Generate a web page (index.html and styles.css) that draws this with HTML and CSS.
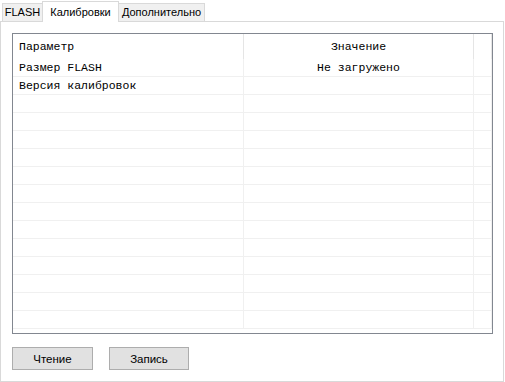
FILE: index.html
```html
<!DOCTYPE html>
<html lang="ru">
<head>
    <meta charset="UTF-8">
    <title>Калибровки</title>
    <link rel="stylesheet" href="styles.css">
</head>
<body>
    <div class="window">
        <div class="tabs">
            <div class="tab tab-flash">FLASH</div>
            <div class="tab tab-calib active">Калибровки</div>
            <div class="tab tab-extra">Дополнительно</div>
        </div>

        <div class="panel">
            <div class="list">
                <div class="row head">
                    <div class="cell">Параметр</div>
                    <div class="cell center">Значение</div>
                    <div class="cell"></div>
                </div>
                <div class="row">
                    <div class="cell">Размер FLASH</div>
                    <div class="cell center">Не загружено</div>
                    <div class="cell"></div>
                </div>
                <div class="row">
                    <div class="cell">Версия калибровок</div>
                    <div class="cell center"></div>
                    <div class="cell"></div>
                </div>
                <div class="row"><div class="cell"></div><div class="cell"></div><div class="cell"></div></div>
                <div class="row"><div class="cell"></div><div class="cell"></div><div class="cell"></div></div>
                <div class="row"><div class="cell"></div><div class="cell"></div><div class="cell"></div></div>
                <div class="row"><div class="cell"></div><div class="cell"></div><div class="cell"></div></div>
                <div class="row"><div class="cell"></div><div class="cell"></div><div class="cell"></div></div>
                <div class="row"><div class="cell"></div><div class="cell"></div><div class="cell"></div></div>
                <div class="row"><div class="cell"></div><div class="cell"></div><div class="cell"></div></div>
                <div class="row"><div class="cell"></div><div class="cell"></div><div class="cell"></div></div>
                <div class="row"><div class="cell"></div><div class="cell"></div><div class="cell"></div></div>
                <div class="row"><div class="cell"></div><div class="cell"></div><div class="cell"></div></div>
                <div class="row"><div class="cell"></div><div class="cell"></div><div class="cell"></div></div>
                <div class="row"><div class="cell"></div><div class="cell"></div><div class="cell"></div></div>
                <div class="row"><div class="cell"></div><div class="cell"></div><div class="cell"></div></div>
            </div>

            <div class="actions">
                <button class="btn">Чтение</button>
                <button class="btn">Запись</button>
            </div>
        </div>
    </div>
</body>
</html>
```

FILE: styles.css
```css
body {
    margin: 0;
    background: #ffffff;
    font-family: 'Liberation Sans', Arial, sans-serif;
    font-size: 11px;
    color: #000;
}

.window {
    width: 505px;
    height: 382px;
}

.tabs {
    display: flex;
    align-items: flex-end;
    height: 21px;
    padding-left: 2px;
    position: relative;
    z-index: 1;
}

.tab {
    box-sizing: border-box;
    height: 18px;
    line-height: 17px;
    border: 1px solid #d9d9d9;
    border-bottom: none;
    background: #f0f0f0;
    text-align: center;
    white-space: nowrap;
}

.tab + .tab {
    border-left: none;
}

.tab-flash {
    width: 41px;
}

.tab-calib {
    width: 77px;
}

.tab-extra {
    width: 87px;
}

.tab.active {
    height: 21px;
    line-height: 20px;
    background: #ffffff;
    border-left: 1px solid #d9d9d9;
    margin-left: -1px;
    margin-bottom: -1px;
}

.tab.active + .tab {
    border-left: 1px solid #d9d9d9;
    margin-left: -1px;
}

.panel {
    box-sizing: border-box;
    width: 504px;
    height: 361px;
    border: 1px solid #d9d9d9;
    background: #ffffff;
    padding: 11px 0 0 11px;
}

.list {
    box-sizing: border-box;
    width: 481px;
    height: 301px;
    border: 1px solid #828790;
    overflow: hidden;
    font-family: 'Liberation Mono', 'Courier New', monospace;
    font-size: 11.5px;
}

.row {
    display: grid;
    grid-template-columns: 231px 230px 1fr;
    height: 18px;
    box-sizing: border-box;
    border-bottom: 1px solid #f0f0f0;
}

.row.head {
    height: 25px;
    border-bottom: none;
}

.cell {
    border-right: 1px solid #f0f0f0;
    padding-left: 6px;
    line-height: 17px;
    white-space: nowrap;
}

.row.head .cell {
    line-height: 25px;
    border-right-color: #e5e5e5;
}

.cell.center {
    text-align: center;
    padding-left: 0;
}

.actions {
    display: flex;
    gap: 16px;
    margin-top: 13px;
}

.btn {
    box-sizing: border-box;
    width: 81px;
    height: 23px;
    background: #e1e1e1;
    border: 1px solid #adadad;
    border-radius: 0;
    font-family: 'Liberation Sans', Arial, sans-serif;
    font-size: 11.5px;
    color: #000;
    padding: 0;
}

.btn + .btn {
    width: 80px;
}
```
